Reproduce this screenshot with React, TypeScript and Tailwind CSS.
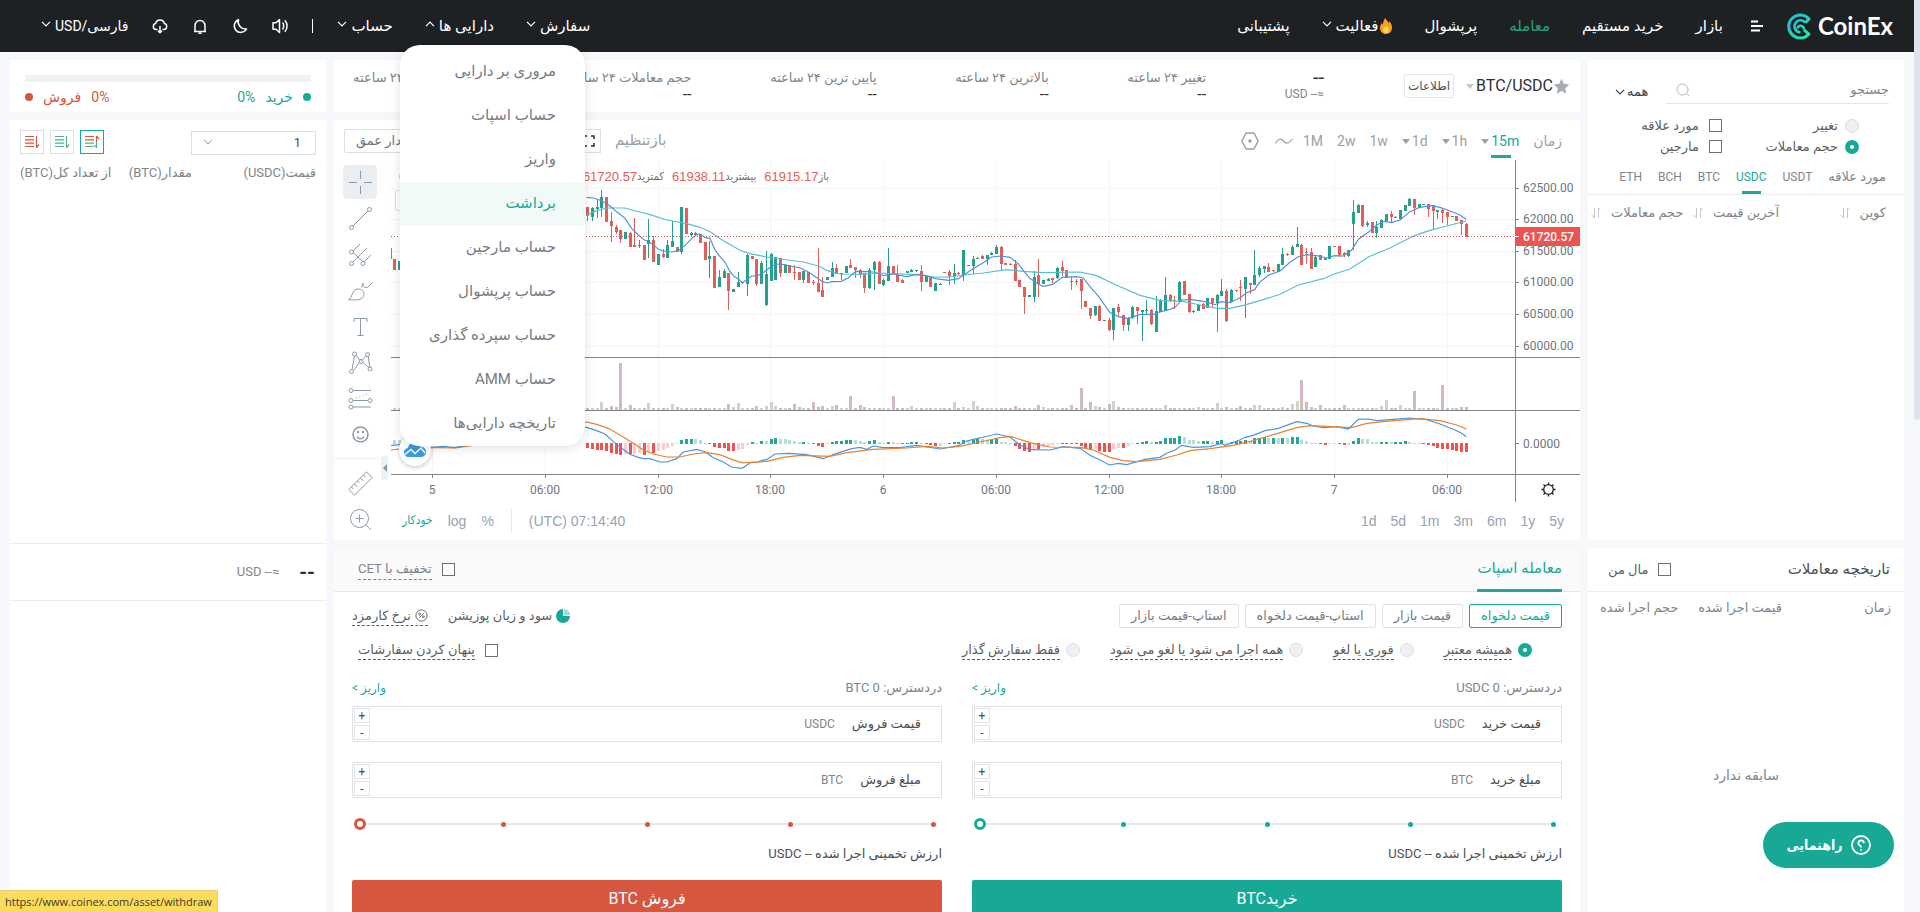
import { ReactNode } from 'react';
import clsx from 'clsx';

type IconProps = { className?: string };
type Candle = [high: number, top: number, bottom: number, low: number, up: 0 | 1];
type Side = 'buy' | 'sell';

/* ---------- chart data ---------- */

// Series values are kept in thirds of a pixel, counted from FIRST (15 minutes per step).
const FIRST = -15;
const STEP = 14.09;
const ORIGIN = 985;

const candles: Candle[] = [
  [262, 262, 288, 302, 0], [260, 265, 290, 302, 1], [237, 262, 268, 295, 1], [210, 231, 264, 292, 1],
  [231, 231, 306, 306, 0], [275, 302, 318, 366, 0], [316, 320, 336, 343, 0], [330, 330, 356, 368, 0],
  [336, 336, 357, 357, 1], [337, 338, 381, 381, 0], [293, 374, 380, 380, 0], [361, 376, 379, 385, 1],
  [375, 375, 419, 419, 0], [297, 361, 372, 413, 1], [348, 361, 425, 425, 0], [403, 403, 434, 434, 1],
  [388, 402, 412, 414, 0], [361, 375, 413, 415, 1], [302, 362, 380, 380, 1], [380, 380, 396, 396, 0],
  [261, 261, 397, 402, 1], [263, 263, 342, 342, 0], [336, 340, 344, 350, 1], [336, 339, 344, 348, 0],
  [342, 342, 369, 369, 0], [366, 366, 419, 419, 0], [362, 409, 418, 475, 1], [408, 408, 503, 505, 0],
  [450, 470, 501, 501, 1], [448, 453, 474, 474, 1], [460, 460, 514, 570, 0], [507, 507, 516, 516, 1],
  [456, 487, 500, 500, 1], [485, 487, 490, 492, 1], [403, 405, 492, 528, 1], [407, 408, 417, 417, 0],
  [417, 417, 492, 497, 0], [422, 429, 491, 491, 1], [393, 462, 555, 558, 1], [400, 402, 482, 482, 1],
  [411, 411, 480, 480, 1], [414, 414, 459, 472, 0], [434, 434, 459, 459, 1], [435, 435, 459, 459, 0],
  [436, 456, 460, 480, 0], [456, 456, 480, 480, 0], [453, 453, 480, 489, 1], [455, 455, 488, 488, 0],
  [479, 486, 490, 494, 0], [383, 488, 516, 516, 0], [472, 510, 531, 531, 0], [471, 471, 479, 479, 1],
  [426, 444, 472, 472, 1], [432, 444, 462, 462, 0], [458, 458, 461, 481, 1], [438, 438, 458, 458, 1],
  [417, 434, 444, 444, 0], [441, 441, 451, 474, 0], [447, 450, 462, 474, 0], [458, 458, 504, 518, 0],
  [445, 450, 504, 508, 1], [423, 426, 450, 510, 1], [424, 426, 492, 492, 0], [478, 480, 494, 497, 1],
  [384, 438, 482, 482, 1], [438, 438, 461, 461, 0], [435, 461, 486, 486, 0], [478, 480, 488, 488, 0],
  [453, 453, 459, 459, 1], [447, 450, 455, 455, 1], [450, 450, 453, 455, 1], [435, 452, 486, 512, 0],
  [466, 468, 486, 486, 1], [468, 468, 501, 501, 0], [489, 489, 513, 513, 1], [490, 491, 494, 494, 1],
  [456, 456, 460, 460, 0], [450, 456, 468, 495, 0], [432, 458, 468, 492, 1], [456, 460, 463, 465, 0],
  [390, 390, 465, 482, 1], [434, 435, 438, 438, 1], [408, 417, 438, 462, 1], [412, 414, 417, 417, 1],
  [406, 408, 417, 418, 0], [405, 405, 417, 434, 1], [397, 398, 404, 406, 1], [375, 380, 402, 402, 1],
  [378, 380, 432, 450, 0], [430, 430, 434, 436, 0], [430, 432, 435, 436, 0], [420, 432, 482, 482, 0],
  [480, 480, 501, 501, 0], [501, 501, 531, 582, 0], [525, 526, 530, 530, 1], [453, 471, 531, 546, 1],
  [417, 465, 492, 531, 0], [480, 480, 492, 492, 1], [474, 476, 482, 482, 1], [474, 475, 480, 488, 0],
  [441, 444, 474, 476, 1], [423, 441, 453, 468, 0], [450, 450, 474, 474, 0], [470, 482, 486, 510, 0],
  [476, 482, 486, 496, 0], [476, 476, 513, 567, 0], [543, 543, 560, 560, 0], [563, 563, 588, 597, 0],
  [558, 558, 585, 588, 1], [556, 558, 602, 602, 0], [600, 600, 603, 603, 1], [594, 600, 630, 632, 0],
  [563, 565, 630, 660, 1], [552, 561, 576, 588, 0], [585, 585, 615, 633, 0], [592, 594, 615, 633, 1],
  [558, 561, 594, 596, 1], [561, 561, 573, 612, 0], [570, 571, 577, 663, 1], [540, 571, 574, 582, 1],
  [568, 570, 612, 616, 0], [528, 573, 635, 636, 1], [538, 540, 576, 576, 1], [471, 525, 572, 572, 1],
  [522, 525, 543, 545, 0], [528, 540, 544, 568, 0], [483, 486, 543, 545, 1], [483, 484, 524, 524, 0],
  [522, 522, 576, 578, 0], [570, 572, 576, 578, 1], [552, 554, 572, 572, 1], [549, 553, 566, 568, 0],
  [534, 534, 563, 563, 1], [534, 535, 549, 560, 0], [522, 524, 549, 636, 1], [477, 512, 528, 528, 1],
  [507, 512, 604, 606, 0], [506, 510, 545, 545, 1], [510, 510, 513, 515, 0], [480, 500, 503, 543, 0],
  [471, 471, 507, 594, 1], [488, 490, 495, 522, 0], [390, 465, 495, 495, 1], [437, 444, 465, 472, 1],
  [438, 438, 447, 460, 1], [429, 440, 456, 456, 0], [450, 450, 453, 455, 0], [432, 432, 456, 456, 1],
  [384, 402, 435, 435, 1], [400, 401, 404, 407, 0], [375, 380, 404, 404, 1], [321, 372, 381, 381, 1],
  [373, 375, 435, 435, 0], [384, 396, 400, 432, 0], [384, 396, 447, 447, 0], [408, 410, 440, 440, 1],
  [406, 406, 419, 419, 0], [413, 415, 419, 419, 1], [378, 378, 416, 416, 1], [378, 378, 381, 381, 0],
  [378, 378, 405, 411, 0], [396, 400, 404, 411, 0], [390, 390, 408, 410, 1], [240, 276, 312, 390, 1],
  [252, 255, 278, 278, 1], [255, 255, 318, 321, 0], [303, 308, 316, 321, 1], [306, 306, 338, 338, 0],
  [303, 320, 338, 354, 1], [298, 300, 324, 324, 1], [282, 282, 303, 303, 1], [273, 282, 291, 306, 0],
  [288, 290, 294, 294, 0], [270, 270, 296, 298, 1], [255, 255, 273, 273, 1], [234, 236, 258, 258, 1],
  [237, 237, 264, 285, 0], [252, 252, 265, 265, 1], [252, 252, 255, 255, 1], [252, 252, 266, 290, 0],
  [255, 255, 273, 326, 0], [270, 270, 276, 297, 1], [265, 270, 280, 310, 0], [276, 276, 291, 316, 0],
  [288, 288, 291, 291, 1], [288, 288, 302, 302, 0], [300, 300, 311, 345, 0], [308, 311, 350, 350, 0],
];

const volumePeaks: Record<number, number> = {
  [-12]: 23, [-10]: 12, [-9]: 10, [-8]: 141, [-6]: 14, [-2]: 20, 3: 17, 4: 9, 15: 17, 16: 8, 17: 20, 21: 11,
  23: 11, 24: 23, 25: 11, 29: 17, 30: 8, 33: 23, 34: 8, 35: 11, 37: 11, 38: 14, 41: 41, 43: 14, 44: 8, 50: 41,
  54: 11, 63: 23, 65: 8, 67: 26, 68: 11, 76: 11, 81: 14, 82: 8, 88: 14, 90: 65, 92: 23, 93: 11, 94: 8, 96: 17,
  97: 26, 98: 8, 108: 14, 115: 8, 119: 20, 121: 8, 124: 11, 127: 14, 128: 14, 133: 8, 135: 17, 136: 26,
  137: 89, 138: 23, 139: 8, 141: 14, 146: 14, 154: 11, 155: 29, 158: 14, 161: 56, 167: 74, 171: 8, 172: 8,
};

const histogram = [
  -14, -19, -21, -21, -25, -30, -34, -35, -33, -34, -32, -30, -36, -28, -30, -25, -20, -15, -8, -4, 10, 14, 14, 13,
  10, 3, -3, -13, -15, -16, -24, -24, -20, -17, -6, 4, 2, 8, 7, 14, 17, 14, 13, 11, 8, 4, 4, 1, -3, -9, -12, -3, 4,
  7, 8, 10, 12, 11, 9, 4, 7, 10, 4, 2, 5, 4, 1, -2, -2, 5, 5, 1, -1, -6, -9, -8, -3, 1, 4, 6, 12, 8, 14, 15, 14,
  12, 12, 14, 6, 4, 1, -9, -17, -24, -26, -18, -18, -13, -9, -6, -3, 1, 1, 1, -1, -8, -15, -22, -18, -25, -26, -26,
  -18, -14, -15, -9, -3, 2, 5, 8, 5, 6, 8, 16, 17, 17, 22, 20, 12, 10, 8, 8, 8, 6, 8, 10, 2, 6, 8, 9, 12, 9, 16,
  18, 20, 18, 18, 17, 18, 17, 20, 20, 12, 8, 3, 1, -4, -7, -4, -1, -3, -7, -6, 8, 17, 14, 13, 6, 4, 5, 5, 4, 4, 5,
  7, 4, 2, 1, 1, -6, -10, -14, -17, -18, -20, -23, -26, -26,
];

const fastAverage =
  '770,232 790,234 815,242 840,258 862,277 885,295 905,325 925,345 945,361 968,372 985,388 1000,393 1025,396 1045,392 1065,376 1085,356 1100,344 1112,342 1125,353 1140,355 1155,390 1170,410 1185,427 1200,455 1212,469 1225,477 1237,488 1252,478 1265,468 1280,468 1295,461 1310,450 1322,441 1337,432 1364,434 1393,441 1406,442 1435,456 1462,474 1477,485 1492,489 1505,485 1534,484 1555,473 1577,454 1605,455 1633,456 1660,467 1690,462 1730,470 1760,463 1787,467 1817,476 1855,481 1885,476 1900,466 1928,447 1957,430 1985,411 2013,408 2040,412 2065,432 2098,474 2126,493 2140,499 2168,493 2197,472 2239,470 2260,474 2280,500 2308,532 2339,577 2365,590 2395,596 2430,583 2470,583 2490,576 2520,568 2535,562 2555,540 2580,538 2625,545 2655,554 2674,545 2700,548 2730,533 2750,518 2774,509 2788,488 2815,466 2850,453 2880,427 2903,411 2930,404 2960,407 2990,414 3013,407 3040,408 3065,390 3086,357 3115,337 3139,316 3162,304 3184,308 3210,300 3240,275 3270,262 3302,257 3330,262 3360,273 3385,283 3409,298';
const slowAverage =
  '770,286 800,272 830,264 885,264 930,276 960,284 1010,300 1070,311 1110,322 1140,335 1180,362 1230,391 1260,401 1310,411 1350,417 1420,426 1465,438 1490,451 1530,462 1600,463 1645,459 1760,464 1810,471 1860,471 1900,465 1960,459 2030,449 2080,454 2140,458 2250,456 2300,467 2350,491 2430,526 2490,541 2560,544 2610,555 2660,565 2700,565 2740,556 2790,542 2850,523 2905,495 2980,476 3013,462 3060,447 3115,411 3180,384 3255,346 3300,331 3350,318 3409,303';
const macdLine =
  '183,976 216,974 300,976 375,983 420,974 500,950 600,925 700,912 770,922 800,932 825,942 850,965 875,985 900,1003 925,1012 940,1016 960,1016 990,1026 1010,1026 1040,1016 1060,996 1100,988 1125,995 1150,1013 1180,1026 1205,1041 1236,1045 1265,1026 1280,1028 1295,1021 1310,1019 1335,1002 1375,1000 1430,1004 1480,1016 1520,1000 1565,986 1590,982 1610,988 1630,978 1660,983 1710,983 1760,976 1830,987 1885,977 1910,963 1930,958 1975,948 2000,942 2040,951 2070,975 2100,989 2160,990 2200,980 2250,985 2280,1006 2310,1020 2338,1035 2365,1030 2390,1034 2445,1018 2490,1012 2510,1000 2535,990 2555,976 2590,982 2640,980 2674,970 2685,976 2725,962 2745,952 2770,946 2805,932 2845,925 2900,905 2930,910 2950,918 2980,923 3020,920 3055,927 3085,898 3115,897 3140,902 3190,898 3240,894 3290,899 3330,912 3370,928 3395,940 3409,950';
const signalLine =
  '183,990 216,986 300,982 375,984 420,978 500,960 600,930 700,908 770,906 800,913 835,925 870,945 910,970 940,990 970,1002 1010,1011 1050,1011 1090,1002 1130,998 1170,1004 1205,1018 1235,1028 1260,1028 1310,1024 1360,1012 1410,1006 1500,1009 1550,998 1630,988 1730,984 1790,979 1840,984 1890,979 1950,966 2010,953 2045,950 2100,968 2160,981 2250,982 2290,990 2340,1012 2380,1022 2420,1025 2490,1018 2540,1005 2580,992 2640,986 2710,976 2770,962 2830,944 2900,923 2940,917 3065,923 3110,910 3190,902 3270,896 3330,902 3380,915 3409,927';

const priceTicks = [
  { y: 28, label: '62500.00' },
  { y: 59, label: '62000.00' },
  { y: 91, label: '61500.00' },
  { y: 122, label: '61000.00' },
  { y: 154, label: '60500.00' },
  { y: 186, label: '60000.00' },
];

const timeTicks = [
  { x: 41, label: '5' },
  { x: 154, label: '06:00' },
  { x: 267, label: '12:00' },
  { x: 379, label: '18:00' },
  { x: 492, label: '6' },
  { x: 605, label: '06:00' },
  { x: 718, label: '12:00' },
  { x: 830, label: '18:00' },
  { x: 943, label: '7' },
  { x: 1056, label: '06:00' },
];

const histogramColor = (value: number, previous: number) => {
  if (value >= 0) return value >= previous ? '#26a69a' : '#b2dfdb';
  return value <= previous ? '#ef5350' : '#fccbcd';
};

/* ---------- icons ---------- */

function Chevron({ className }: IconProps) {
  return (
    <svg viewBox="0 0 10 6" className={clsx('h-1.5 w-2.5', className)} fill="none" stroke="currentColor" strokeWidth="1.2">
      <path d="M1 .8 5 4.8 9 .8" />
    </svg>
  );
}

function Caret({ className }: IconProps) {
  return (
    <svg viewBox="0 0 8 5" className={clsx('h-[5px] w-2', className)} fill="currentColor">
      <path d="M0 0h8L4 5z" />
    </svg>
  );
}

function Logo() {
  return (
    <svg viewBox="0 0 24 27" className="h-[27px] w-6" fill="none" strokeLinejoin="round">
      <defs>
        <linearGradient id="logo" x1="0" y1="0" x2="1" y2="1">
          <stop offset="0" stopColor="#2ab4dc" />
          <stop offset="0.45" stopColor="#20cfc0" />
          <stop offset="1" stopColor="#35dfa8" />
        </linearGradient>
      </defs>
      <path
        d="M18.300 9.700 22 6A11.500 11.500 0 1 0 21.800 21.200L16.800 16.600"
        stroke="url(#logo)"
        strokeWidth="3"
      />
      <path
        d="M18.300 9.700A6 6 0 1 0 13.500 19.300M10.500 15.500A3.200 3.200 0 1 1 16.800 16.600"
        stroke="url(#logo)"
        strokeWidth="2.600"
      />
    </svg>
  );
}

function Flame() {
  return (
    <svg viewBox="0 0 12 16" className="h-4 w-3">
      <path d="M5.500 0c.6 2.300 2.400 3.400 3.200 5 .5-.5.7-1.100.7-1.800C11 5 12 7.300 12 9.800 12 13.300 9.300 16 6 16s-6-2.600-6-6c0-2.400 1.200-4 2-5.300.2 1 .5 1.600 1 2C3 4 4 1.600 5.500 0z" fill="#f9a11b" />
      <path d="M6.200 7c.3 1.500 2.600 2.800 2.600 5A2.900 2.900 0 0 1 6 15a2.900 2.900 0 0 1-3-3c0-1.500 1-2.300 1.400-3.200.5.3.7.7.8 1.100.6-.8 1-1.700 1-2.900z" fill="#ffd54a" />
    </svg>
  );
}

function HeaderIcon({ children, label }: { children: ReactNode; label: string }) {
  return (
    <button type="button" aria-label={label}>
      <svg viewBox="0 0 16 16" className="size-4" fill="none" stroke="currentColor" strokeWidth="1.500" strokeLinejoin="round">
        {children}
      </svg>
    </button>
  );
}

function SortIcon() {
  return (
    <svg viewBox="0 0 10 12" className="h-3 w-2.5 text-[#c3c8ce]" fill="none" stroke="currentColor">
      <path d="M3.500 1v10L.5 8M7.500 11V1L9.500 3" />
    </svg>
  );
}

function DepthIcon({ top, bottom, up }: { top: string; bottom: string; up?: boolean }) {
  return (
    <svg viewBox="0 0 16 16" className="size-4" fill="none" strokeWidth="1.200">
      <path d="M1 2.500h9M1 5.800h9" stroke={top} />
      <path d="M1 9.200h9M1 12.500h9" stroke={bottom} />
      <path d="M12.500 2v6" stroke={top} />
      <path d="M12.500 8v6" stroke={bottom} />
      <path d={up ? 'M12.500 2 15 5' : 'M12.500 13.500 15 10.500'} stroke={up ? top : bottom} />
      {up && <path d="M12.500 13.500 10.500 11" stroke={bottom} />}
    </svg>
  );
}

/* ---------- form controls ---------- */

function Checkbox({ id }: { id: string }) {
  return (
    <input
      id={id}
      type="checkbox"
      className="size-[13px] shrink-0 appearance-none border border-[#6b7076] bg-white checked:bg-[#17a996]"
    />
  );
}

function Radio({ id, name, defaultChecked }: { id: string; name: string; defaultChecked?: boolean }) {
  return (
    <input
      id={id}
      name={name}
      type="radio"
      defaultChecked={defaultChecked}
      className="size-[14px] shrink-0 appearance-none rounded-full border border-[#dcdee2] bg-[#eff0f2] checked:border-5 checked:border-[#17a996] checked:bg-white"
    />
  );
}

/* ---------- header ---------- */

const accountMenu = [
  'مروری بر دارایی',
  'حساب اسپات',
  'واریز',
  'برداشت',
  'حساب مارجین',
  'حساب پرپشوال',
  'حساب سپرده گذاری',
  'حساب AMM',
  'تاریخچه دارایی‌ها',
];

function AccountMenu() {
  return (
    <ul className="absolute top-[45px] -right-[91px] z-20 w-[185px] overflow-hidden rounded-[20px] bg-white pt-[5px] text-[15px] text-[#777b80] shadow-[0_2px_12px_rgba(0,0,0,0.12)]">
      {accountMenu.map((item) => (
        <li key={item}>
          <a
            href="#"
            className={clsx('block h-11 pr-[29px] leading-[42px]', item === 'برداشت' && 'bg-[#f2faf9] text-[#17a996]')}
          >
            {item}
          </a>
        </li>
      ))}
    </ul>
  );
}

function NavItem({ children, open, arrow }: { children: ReactNode; open?: boolean; arrow?: boolean }) {
  return (
    <a href="#" className="flex items-center gap-1 whitespace-nowrap">
      {children}
      {arrow && <Chevron className={clsx('-mt-1', open && 'rotate-180')} />}
    </a>
  );
}

function Header() {
  return (
    <header className="flex h-[52px] shrink-0 items-center justify-between bg-[#1e2124] pr-[21px] pl-[41px] text-[15px] text-white">
      <nav className="flex items-center gap-8">
        <a href="#" className="flex items-center gap-[7px]" dir="ltr">
          <Logo />
          <span className="font-['Lato'] text-2xl leading-none font-bold">CoinEx</span>
        </a>
        <button type="button" aria-label="منو" className="-mr-2 -ml-1">
          <svg viewBox="0 0 12 12" className="size-3" stroke="currentColor" strokeWidth="2">
            <path d="M0 1.500h7M0 6h12M0 10.500h9" />
          </svg>
        </button>
        <NavItem>بازار</NavItem>
        <NavItem>خرید مستقیم</NavItem>
        <a href="#" className="text-[#26a17b]">
          معامله
        </a>
        <NavItem>پرپشوال</NavItem>
        <NavItem arrow>
          <span className="flex items-center gap-0.5">
            <Flame />
            فعالیت
          </span>
        </NavItem>
        <NavItem>پشتیبانی</NavItem>
      </nav>
      <div className="flex items-center gap-6">
        <div className="flex items-center gap-8">
          <NavItem arrow>سفارش</NavItem>
          <div className="relative flex h-[52px] items-center">
            <NavItem arrow open>
              دارایی ها
            </NavItem>
            <AccountMenu />
          </div>
          <NavItem arrow>حساب</NavItem>
        </div>
        <span className="h-3.5 w-px bg-white" />
        <HeaderIcon label="صدا">
          <path d="M7.500 1.500v13L4 11.200H1V4.800h3zM10.500 4.500c1.600 1.800 1.600 5.200 0 7M12.800 2.200c3 3.200 3 8.400 0 11.600" />
        </HeaderIcon>
        <HeaderIcon label="حالت شب">
          <path d="M6.500 1.800a6.500 6.500 0 1 0 8 9.200A7.200 7.200 0 0 1 6.500 1.800z" />
        </HeaderIcon>
        <HeaderIcon label="اعلان‌ها">
          <path d="M3 13.500V7.500a5 5 0 0 1 10 0v6M2 13.500h12M6.500 15.200h3" />
        </HeaderIcon>
        <HeaderIcon label="دانلود">
          <path d="M5.500 11.500H4A3 3 0 0 1 3.600 5.600a4.500 4.500 0 0 1 8.800 0A3 3 0 0 1 12 11.500h-1.500M8 8v6.500M6 12.700l2 2 2-2" />
        </HeaderIcon>
        <NavItem arrow>
          <span className="text-sm">فارسی/USD</span>
        </NavItem>
      </div>
    </header>
  );
}

/* ---------- right column ---------- */

function MarketList() {
  return (
    <section className="flex h-[480px] flex-col bg-white pt-5 text-[13px] text-[#80858b]">
      <div className="flex items-center pr-[15px] pl-[27px]">
        <div className="flex h-6 w-[223px] items-center justify-between border-b border-[#e3e5e8] pb-1">
          <input
            type="search"
            aria-label="جستجو"
            placeholder="جستجو"
            className="w-40 bg-transparent text-[13px] outline-none placeholder:text-[#80858b]"
          />
          <svg viewBox="0 0 14 14" className="ml-2.5 size-3.5 text-[#b0b4b9]" fill="none" stroke="currentColor">
            <circle cx="6.500" cy="6.500" r="5.500" />
            <path d="m10.500 10.500 2.500 2.500" />
          </svg>
        </div>
        <button type="button" className="mr-auto flex items-center gap-0.5 text-[#3c4045]">
          همه
          <Chevron />
        </button>
      </div>
      <div className="mt-3 grid grid-cols-[137px_1fr] gap-y-0.5 pr-[45px] leading-[19px] text-[#5b5f64]">
        <label htmlFor="sort-change" className="flex items-center gap-[7px]">
          <Radio id="sort-change" name="sort" />
          تغییر
        </label>
        <label htmlFor="only-favorite" className="flex items-center gap-[10px]">
          <Checkbox id="only-favorite" />
          مورد علاقه
        </label>
        <label htmlFor="sort-volume" className="flex items-center gap-[7px]">
          <Radio id="sort-volume" name="sort" defaultChecked />
          حجم معاملات
        </label>
        <label htmlFor="only-margin" className="flex items-center gap-[10px]">
          <Checkbox id="only-margin" />
          مارجین
        </label>
      </div>
      <div role="tablist" className="mt-[3px] flex h-9 items-center gap-4 border-b border-[#eceef0] pr-[18px] text-[12px]">
        <button type="button" role="tab" className="text-[13px]">
          مورد علاقه
        </button>
        {['USDT', 'USDC', 'BTC', 'BCH', 'ETH'].map((coin) => (
          <button
            key={coin}
            type="button"
            role="tab"
            className={clsx('relative flex h-full items-center', coin === 'USDC' && 'text-[#17a996]')}
          >
            {coin}
            {coin === 'USDC' && <span className="absolute inset-x-1.5 bottom-0 h-[3px] bg-[#26a69a]" />}
          </button>
        ))}
      </div>
      <div className="flex items-center gap-2 pt-2 pr-[18px] pl-[3px] leading-5">
        <span className="flex w-[99px] items-center gap-2.5">
          کوین
          <SortIcon />
        </span>
        <span className="flex items-center gap-2.5">
          آخرین قیمت
          <SortIcon />
        </span>
        <span className="mr-auto flex items-center gap-2.5">
          حجم معاملات
          <SortIcon />
        </span>
      </div>
    </section>
  );
}

function TradeHistory() {
  return (
    <section className="flex flex-1 flex-col bg-white text-[13px] text-[#80858b]">
      <div className="flex h-11 items-center justify-between border-b border-[#eceef0] pr-3.5 pl-5">
        <h2 className="text-[15px] text-[#4b4f54]">تاریخچه معاملات</h2>
        <label htmlFor="mine" className="flex items-center gap-2.5 text-[#5b5f64]">
          <Checkbox id="mine" />
          مال من
        </label>
      </div>
      <div className="grid grid-cols-[109px_1fr_auto] pt-1.5 pr-[13px] pl-3">
        <span>زمان</span>
        <span>قیمت اجرا شده</span>
        <span>حجم اجرا شده</span>
      </div>
      <p className="pt-[147px] text-center text-sm">سابقه ندارد</p>
    </section>
  );
}

/* ---------- center column ---------- */

const stats = ['تغییر ۲۴ ساعته', 'بالاترین ۲۴ ساعته', 'پایین ترین ۲۴ ساعته', 'حجم معاملات ۲۴ ساعته', 'ارزش معاملات ۲۴ ساعته'];

function MarketInfo() {
  return (
    <section className="flex h-[52px] items-center bg-white pr-2.5 pl-[19px]">
      <svg viewBox="0 0 24 24" className="size-[17px]" fill="#a8adb3">
        <path d="m12 1 3.300 7.200 7.700.9-5.700 5.300 1.500 7.800L12 18.400l-6.800 3.800 1.500-7.800L1 9.100l7.700-.9z" />
      </svg>
      <h1 className="text-base text-[#2b2f33]">BTC/USDC</h1>
      <Caret className="mr-0.5 text-[#c3c8ce]" />
      <button type="button" className="mr-3 h-6 rounded-xs border border-[#e3e5e8] px-[3px] text-[12px] text-[#4b4f54]">
        اطلاعات
      </button>
      <div className="mr-20 flex flex-1 justify-between text-[13px] leading-[17px] text-[#80858b]">
        <div>
          <p className="text-xl leading-[17px] text-[#2b2f33]">--</p>
          <p className="text-[12px] leading-[17px]">≈-- USD</p>
        </div>
        {stats.map((label) => (
          <div key={label}>
            <p>{label}</p>
            <p className="text-base leading-[17px] text-[#2b2f33]">--</p>
          </div>
        ))}
      </div>
    </section>
  );
}

function ChartToolbar() {
  return (
    <div className="flex h-10 items-center justify-between pt-0.5 pr-[18px] pl-2.5 text-sm text-[#9aa0a8]">
      <div className="flex items-center gap-3.5">
        <button type="button">زمان</button>
        <button type="button" className="relative flex h-[34px] items-center gap-0.5 text-[#17a996]">
          15m
          <Caret className="text-[#9aa0a8]" />
          <span className="absolute right-2 bottom-0 h-[3px] w-5 bg-[#26a69a]" />
        </button>
        {['1h', '1d'].map((period) => (
          <button key={period} type="button" className="flex items-center gap-0.5">
            {period}
            <Caret />
          </button>
        ))}
        {['1w', '2w', '1M'].map((period) => (
          <button key={period} type="button">
            {period}
          </button>
        ))}
        <button type="button" aria-label="خط" className="-mr-1">
          <svg viewBox="0 0 18 10" className="h-2.5 w-[18px]" fill="none" stroke="currentColor" strokeWidth="1.200">
            <path d="M.5 7.500C3 3 5.500 1.500 8.500 5s5.500 2.500 9-2" />
          </svg>
        </button>
        <button type="button" aria-label="شاخص" className="mr-0.5">
          <svg viewBox="0 0 18 18" className="size-[18px]" fill="none" stroke="currentColor" strokeWidth="1.500">
            <path d="M5 1h8l4.200 8-4.200 8H5L.8 9z" strokeLinejoin="round" />
            <circle cx="9" cy="9" r="1" fill="currentColor" />
          </svg>
        </button>
      </div>
      <div className="flex items-center gap-3.5">
        <button type="button" className="text-[15px]">
          بازتنظیم
        </button>
        <button type="button" aria-label="تمام صفحه" className="grid size-6 place-items-center border border-[#dcdfe6] text-[#2b2f33]">
          <svg viewBox="0 0 12 12" className="size-3" fill="none" stroke="currentColor" strokeWidth="1.500">
            <path d="M1 4V1h3M8 1h3v3M11 8v3H8M4 11H1V8" />
          </svg>
        </button>
        <button type="button" className="mr-[132px] h-6 rounded-xs border border-[#dcdfe6] px-[11px] text-[13px] text-[#6f7378]">
          نمودار عمق
        </button>
      </div>
    </div>
  );
}

const drawingTools: { label: string; icon: ReactNode }[] = [
  { label: 'Cross', icon: <path d="M12.500 1v8M12.500 16v8M1 12.500h8M16 12.500h8" /> },
  {
    label: 'Trend line',
    icon: (
      <>
        <path d="M5 20 20 5" />
        <circle cx="3.500" cy="21.500" r="2" />
        <circle cx="21.500" cy="3.500" r="2" />
      </>
    ),
  },
  {
    label: 'Pitchfork',
    icon: (
      <>
        <path d="M5 9 12 2M5 20 19 6M16 20l7-7M5 10.500l10 9" />
        <circle cx="3.500" cy="10" r="2" />
        <circle cx="3.500" cy="21.500" r="2" />
        <circle cx="15" cy="21.500" r="2" />
      </>
    ),
  },
  {
    label: 'Brush',
    icon: <path d="M.5 21.500c4-1 3-10.500 9.500-10.500 4 0 6 2.500 6 5.500 0 6-9 6-15.500 5zM14.500 5.500c0 3 2.500 5 5.500 3.500L24.500 4.500M14 9.500c0-2 .5-3 2-4.500" />,
  },
  { label: 'Text', icon: <path d="M6 8V4.500h13V8M12.500 4.500v17M9.500 21.500h6" /> },
  {
    label: 'Pattern',
    icon: (
      <>
        <path d="M4 19.500 6.500 6M8 5l4 5.500M14 10.500 18 6M20 6l2 12M6 20l5-7M15 12.500l6 5" />
        <circle cx="3.500" cy="21.500" r="2" />
        <circle cx="6.500" cy="4" r="2" />
        <circle cx="13" cy="11.500" r="2" />
        <circle cx="19.500" cy="4.500" r="2" />
        <circle cx="22" cy="19" r="2" />
      </>
    ),
  },
  {
    label: 'Forecast',
    icon: (
      <>
        <path d="M5 4.500h18M5 14.500h15M5 21h18" />
        <path d="M8 12l13-5" strokeDasharray="1 2.500" />
        <circle cx="3" cy="4.500" r="2" />
        <circle cx="3" cy="14.500" r="2" />
        <circle cx="22" cy="14.500" r="2" />
        <circle cx="3" cy="21" r="2" />
      </>
    ),
  },
  {
    label: 'Emoji',
    icon: (
      <>
        <circle cx="12.500" cy="12.500" r="7.500" strokeWidth="1.500" />
        <path d="M9 14.500c1.500 3 5.500 3 7 0" strokeWidth="1.500" />
        <path d="M10 9v2M15 9v2" strokeWidth="2" />
      </>
    ),
  },
];

const measureTools: { label: string; icon: ReactNode }[] = [
  {
    label: 'Measure',
    icon: <path d="M18.500.8 24.200 6.500 6.500 24.200.8 18.500zM15.500 4l2 2M12.500 7l3 3M9.500 10l2 2M6.500 13l3 3M3.500 16l2 2" />,
  },
  {
    label: 'Zoom in',
    icon: (
      <>
        <circle cx="11.500" cy="11.500" r="9" />
        <path d="M7.500 11.500h8M11.500 7.500v8M18 18l5 5" />
      </>
    ),
  },
];

function ToolButton({ label, icon, active }: { label: string; icon: ReactNode; active?: boolean }) {
  return (
    <button
      type="button"
      aria-label={label}
      className={clsx('my-px grid size-[34px] place-items-center rounded-sm', active && 'bg-[#ebeef0]')}
    >
      <svg viewBox="0 0 25 25" className="size-[25px] text-[#8a9aa8]" fill="none" stroke="currentColor">
        {icon}
      </svg>
    </button>
  );
}

function Chart() {
  const x = (index: number) => ORIGIN + index * STEP;

  return (
    <svg viewBox="0 0 1189 342" className="h-auto w-full" fontFamily="Roboto" fontSize="12" fill="#70757d">
      <g stroke="#f3f5f7">
        {priceTicks.map(({ y }) => (
          <path key={y} d={`M0 ${y}.500H1124`} />
        ))}
        {timeTicks.map((tick) => (
          <path key={tick.x} d={`M${tick.x}.500 0V314`} />
        ))}
      </g>

      <g transform={`translate(-61 -40) scale(${1 / 3})`}>
        <g shapeRendering="crispEdges">
          {candles.map(([high, top, bottom, low, up], i) => (
            <g key={i} fill={up ? '#26a08a' : '#e25e59'}>
              <rect x={x(i + FIRST) - 1.5} y={high} width="3" height={low - high} />
              <rect x={x(i + FIRST) - 4.5} y={top} width="9" height={bottom - top} />
            </g>
          ))}
          <path d="M184 384v34" stroke="#e25e59" strokeWidth="3" />
          <path d="M189 418h9v32h-9z" fill="#e25e59" />
          <path d="M204 422h9v28h-9z" fill="#26a08a" />
          {candles.map(([, , , , up], i) => {
            const height = volumePeaks[i + FIRST] ?? 6;
            return (
              <rect
                key={i}
                x={x(i + FIRST) - 4.5}
                y={870 - height}
                width="9"
                height={height}
                fill={up ? '#cdd6c2' : '#d5babd'}
              />
            );
          })}
          <path d="M190 864h9v6h-9zM204 864h9v6h-9z" fill="#cdd6c2" />
          {histogram.map((value, i) => (
            <rect
              key={i}
              x={x(i + FIRST) - 4.5}
              y={value < 0 ? 969 : 971 - value}
              width="9"
              height={Math.max(Math.abs(value), 2)}
              fill={histogramColor(value, histogram[i - 1] ?? 0)}
            />
          ))}
          <path d="M190 961h9v10h-9zM204 960h9v11h-9z" fill="#b2dfdb" />
        </g>
        <g fill="none" strokeWidth="3.500">
          <polyline points={slowAverage} stroke="#55c0cf" />
          <polyline points={fastAverage} stroke="#4f90da" />
          <polyline points={macdLine} stroke="#4a94de" />
          <polyline points={signalLine} stroke="#e8822e" />
        </g>
      </g>

      <path d="M0 76.500H1124" stroke="#c9504c" strokeDasharray="1 2" />
      <g stroke="#80848b" shapeRendering="crispEdges">
        <path d="M0 197.500H1189M0 250.500H1189M0 314.500H1189M1124.500 0V342" />
        {priceTicks.map(({ y }) => (
          <path key={y} d={`M1124 ${y}.500h4`} />
        ))}
        <path d="M1124 283.500h4" />
        {timeTicks.map((tick) => (
          <path key={tick.x} d={`M${tick.x}.500 314v4`} />
        ))}
      </g>

      {priceTicks.map(({ y, label }) => (
        <text key={label} x="1132" y={y + 4}>
          {label}
        </text>
      ))}
      <text x="1132" y="288">
        0.0000
      </text>
      <path d="M1124 67h65v19h-65z" fill="#ef5350" />
      <path d="M1124 76.500h4" stroke="#fff" />
      <text x="1132" y="81" fill="#fff" fontWeight="500">
        61720.57
      </text>
      <g textAnchor="middle">
        {timeTicks.map((tick) => (
          <text key={tick.x} x={tick.x} y="334">
            {tick.label}
          </text>
        ))}
      </g>
      <g stroke="#1e2124" strokeWidth="1.300" fill="none">
        <circle cx="1157.500" cy="329.500" r="4.800" />
        <path d="M1157.500 322.500v2M1157.500 334.500v2M1150.500 329.500h2M1162.500 329.500h2M1152.500 324.500l1.500 1.500M1161 333l1.500 1.500M1162.500 324.500 1161 326M1154 333l-1.500 1.500" />
      </g>
    </svg>
  );
}

const legend = [
  { label: 'باز', value: '61915.17' },
  { label: 'بیشترید', value: '61938.11' },
  { label: 'کمترید', value: '61720.57' },
  { label: 'بسته', value: '61720.57' },
];

function ChartPanel() {
  return (
    <section className="flex h-[420px] flex-col bg-white">
      <ChartToolbar />
      <div className="flex flex-1" dir="ltr">
        <div className="flex w-[57px] shrink-0 flex-col">
          <div className="flex flex-col pt-1 pl-[9px]">
            {drawingTools.map((tool, i) => (
              <ToolButton key={tool.label} {...tool} active={i === 0} />
            ))}
          </div>
          <div className="mt-1.5 mr-3 flex flex-col border-t border-[#eceef0] pt-1.5 pl-[9px]">
            {measureTools.map((tool) => (
              <ToolButton key={tool.label} {...tool} />
            ))}
          </div>
        </div>
        <div className="relative flex min-w-0 flex-1 flex-col">
          <Chart />
          <div className="absolute top-2 left-2 flex flex-col gap-1">
            <p dir="rtl" className="flex h-[18px] w-[430px] items-center gap-2 bg-white text-[#6b7079]">
              {legend.map(({ label, value }) => (
                <span
                  key={label}
                  className="flex items-center font-['DejaVu_Sans_Condensed'] text-[11px] last:mr-auto"
                >
                  {label}
                  <span className="font-['Liberation_Sans'] text-[13px] text-[#e25e59]">{value}</span>
                </span>
              ))}
            </p>
            <button type="button" aria-label="Collapse legend" className="-ml-1 h-[21px] w-6 rounded-xs border border-[#dcdfe6] bg-white" />
          </div>
          <button
            type="button"
            aria-label="Collapse toolbar"
            className="absolute bottom-[60px] -left-2.5 grid h-6 w-[7px] place-items-center rounded-xs bg-[#eef1f3] text-[#8a9aa8]"
          >
            <svg viewBox="0 0 4 8" className="h-2 w-1" fill="currentColor">
              <path d="M4 0v8L0 4z" />
            </svg>
          </button>
          <a
            href="#"
            aria-label="TradingView"
            className="absolute bottom-[74px] left-2 grid size-8 place-items-center rounded-full bg-white shadow-[0_1px_4px_rgba(0,0,0,0.25)]"
          >
            <svg viewBox="0 0 22 14" className="h-3.5 w-[22px]">
              <path d="M5 14a4.500 4.500 0 0 1-1-9 6.500 6.500 0 0 1 12.500-1.200A5 5 0 0 1 17.500 14z" fill="#3a9be5" />
              <path d="m1 11.500 6-5 4 4L17 5l4 5" stroke="#fff" strokeWidth="1.500" fill="none" />
            </svg>
          </a>
          <div className="flex flex-1 items-center justify-between pr-4 pl-[11px] font-['Liberation_Sans'] text-sm text-[#95a3b1]">
            <div className="flex items-center gap-[15px]">
              <button type="button" className="font-['DejaVu_Sans_Condensed'] text-[12px] text-[#17a996]">
                خودکار
              </button>
              <button type="button">log</button>
              <button type="button">%</button>
              <span className="ml-0.5 h-6 w-px bg-[#e6e9ec]" />
              <span className="ml-0.5">(UTC) 07:14:40</span>
            </div>
            <div className="flex gap-3.5">
              {['1d', '5d', '1m', '3m', '6m', '1y', '5y'].map((range) => (
                <button key={range} type="button">
                  {range}
                </button>
              ))}
            </div>
          </div>
        </div>
      </div>
    </section>
  );
}

const orderTypes = ['قیمت دلخواه', 'قیمت بازار', 'استاپ-قیمت دلخواه', 'استاپ-قیمت بازار'];
const validity = ['همیشه معتبر', 'فوری یا لغو', 'همه اجرا می شود یا لغو می شود', 'فقط سفارش گذار'];

function AmountField({ id, label, unit }: { id: string; label: string; unit: string }) {
  return (
    <div className="flex h-9 items-center border border-[#dfe2e6] pr-5 pl-px">
      <label htmlFor={id} className="text-[#4b4f54]">
        {label}
      </label>
      <span className="mr-[17px] text-[12px] text-[#80858b]">{unit}</span>
      <input id={id} type="text" className="mx-3 min-w-0 flex-1 bg-transparent outline-none" />
      <div className="flex flex-col gap-0.5 text-[12px] leading-3 text-[#4b4f54]">
        <button type="button" className="h-[15px] w-4 border border-[#dfe2e6]">
          +
        </button>
        <button type="button" className="h-[15px] w-4 border border-[#dfe2e6]">
          -
        </button>
      </div>
    </div>
  );
}

function OrderForm({ side }: { side: Side }) {
  const buy = side === 'buy';

  return (
    <form className="flex flex-1 flex-col">
      <div className="flex items-center justify-between leading-5 text-[#80858b]">
        <span>دردسترس: 0 {buy ? 'USDC' : 'BTC'}</span>
        <a href="#" className="text-[12px] text-[#17a996]">
          واریز &gt;
        </a>
      </div>
      <div className="flex flex-col gap-5 pt-2">
        <AmountField id={`${side}-price`} label={buy ? 'قیمت خرید' : 'قیمت فروش'} unit="USDC" />
        <AmountField id={`${side}-amount`} label={buy ? 'مبلغ خرید' : 'مبلغ فروش'} unit="BTC" />
      </div>
      <div className="relative mx-0.5 mt-5 flex h-3 items-center" dir="ltr">
        <div
          className={clsx(
            'pointer-events-none absolute inset-x-1 flex items-center justify-between',
            buy ? 'text-[#17a996]' : 'text-[#d6563f]',
          )}
        >
          <span className="absolute inset-x-0 h-0.5 bg-[#e6e8ec]" />
          {[0, 25, 50, 75, 100].map((stop) => (
            <span key={stop} className="relative size-[5px] rounded-full bg-current" />
          ))}
        </div>
        <input
          type="range"
          min="0"
          max="100"
          defaultValue="0"
          aria-label={buy ? 'درصد خرید' : 'درصد فروش'}
          className={clsx(
            'relative h-3 w-full appearance-none bg-transparent [&::-webkit-slider-thumb]:size-3 [&::-webkit-slider-thumb]:appearance-none [&::-webkit-slider-thumb]:rounded-full [&::-webkit-slider-thumb]:border-3 [&::-webkit-slider-thumb]:bg-white',
            buy
              ? '[&::-webkit-slider-thumb]:border-[#17a996]'
              : '[&::-webkit-slider-thumb]:border-[#d6563f]',
          )}
        />
      </div>
      <p className="pt-3.5 leading-5 text-[#4b4f54]">ارزش تخمینی اجرا شده -- USDC</p>
      <button
        type="button"
        className={clsx('mt-4 h-[38px] rounded-xs text-base text-white', buy ? 'bg-[#17a996]' : 'bg-[#d6563f]')}
      >
        {buy ? 'خریدBTC' : 'فروش BTC'}
      </button>
    </form>
  );
}

function TradePanel() {
  return (
    <section className="flex flex-1 flex-col bg-white text-[13px]">
      <div className="flex h-11 items-center justify-between border-b border-[#e6e8ea] bg-[#fafafa] pr-[18px] pl-6">
        <h2 className="-mb-px flex h-11 items-center border-b-3 border-[#26a69a] text-[15px] text-[#17a996]">معامله اسپات</h2>
        <div className="flex items-center gap-2.5 text-[#80858b]">
          <Checkbox id="cet" />
          <label htmlFor="cet" className="border-b border-dashed border-[#80858b]">
            تخفیف با CET
          </label>
        </div>
      </div>
      <div className="flex items-center justify-between px-[18px] pt-3">
        <div className="flex gap-1.5">
          {orderTypes.map((type, i) => (
            <button
              key={type}
              type="button"
              className={clsx(
                'h-6 rounded-xs border px-[11px]',
                i === 0 ? 'border-[#17a996] text-[#17a996]' : 'border-[#dfe2e6] text-[#777b80]',
              )}
            >
              {type}
            </button>
          ))}
        </div>
        <div className="flex items-center gap-5 text-[#5b5f64]">
          <a href="#" className="flex items-center gap-1">
            <svg viewBox="0 0 14 14" className="size-3.5">
              <path d="M7 0a7 7 0 1 0 7 7H7z" fill="#17a996" />
              <path d="M8 0a6 6 0 0 1 6 6H8z" fill="#a5dcd6" />
            </svg>
            سود و زیان پوزیشن
          </a>
          <a href="#" className="flex items-center gap-1 border-b border-dashed border-[#5b5f64]">
            <svg viewBox="0 0 14 14" className="size-[13px]" fill="none" stroke="currentColor">
              <circle cx="7" cy="7" r="6" />
              <circle cx="5" cy="5.500" r="1" />
              <circle cx="9" cy="8.500" r="1" />
              <path d="m4.500 9.500 5-5" />
            </svg>
            نرخ کارمزد
          </a>
        </div>
      </div>
      <div className="flex h-8 items-center justify-between pt-3 pr-12 pl-6 text-[#5b5f64]">
        <div className="flex gap-[30px]">
          {validity.map((option, i) => (
            <div key={option} className="flex items-center gap-1.5">
              <Radio id={`validity-${i}`} name="validity" defaultChecked={i === 0} />
              <label htmlFor={`validity-${i}`} className="border-b border-dashed border-[#5b5f64]">
                {option}
              </label>
            </div>
          ))}
        </div>
        <div className="flex items-center gap-2.5">
          <Checkbox id="hide-orders" />
          <label htmlFor="hide-orders" className="border-b border-dashed border-[#5b5f64]">
            پنهان کردن سفارشات
          </label>
        </div>
      </div>
      <div className="flex gap-[30px] px-[18px] pt-[18px]">
        <OrderForm side="buy" />
        <OrderForm side="sell" />
      </div>
    </section>
  );
}

/* ---------- left column ---------- */

function BuySellRatio() {
  return (
    <section className="flex h-[52px] flex-col gap-[7px] bg-white px-[15px] pt-[15px]">
      <div className="h-[7px] bg-[#f0f1f2]" />
      <div className="flex justify-between text-sm leading-4">
        <span className="flex items-center gap-2.5 text-[#17a996]">
          <span className="size-2 rounded-full bg-current" />
          خرید
          <span>0%</span>
        </span>
        <span className="flex items-center gap-2.5 text-[#d6563f]">
          <span>0%</span>
          فروش
          <span className="size-2 rounded-full bg-current" />
        </span>
      </div>
    </section>
  );
}

function OrderBook() {
  const red = '#d6563f';
  const green = '#4bb58a';

  return (
    <section className="flex flex-1 flex-col bg-white">
      <div className="flex h-[423px] flex-col px-2.5 pt-2.5">
        <div className="flex items-center justify-between">
          <div className="relative">
            <select aria-label="عمق" className="h-6 w-[125px] appearance-none border border-[#dcdfe6] bg-white pr-3.5 text-[13px] text-[#4b4f54]">
              <option>1</option>
            </select>
            <Chevron className="pointer-events-none absolute top-[9px] left-3 text-[#b0b4b9]" />
          </div>
          <div className="flex gap-1.5">
            <button type="button" aria-label="همه" className="grid size-6 place-items-center border border-[#17a996]">
              <DepthIcon top={red} bottom={green} up />
            </button>
            <button type="button" aria-label="خرید" className="grid size-6 place-items-center border border-[#dcdfe6]">
              <DepthIcon top={green} bottom={green} />
            </button>
            <button type="button" aria-label="فروش" className="grid size-6 place-items-center border border-[#dcdfe6]">
              <DepthIcon top={red} bottom={red} />
            </button>
          </div>
        </div>
        <div className="grid grid-cols-[124px_1fr_auto] pt-2 text-[13px] leading-5 text-[#80858b]">
          <span>قیمت(USDC)</span>
          <span>مقدار(BTC)</span>
          <span>از تعداد کل(BTC)</span>
        </div>
      </div>
      <div className="flex h-[58px] items-center gap-5 border-y border-[#e9edef] pr-[11px]">
        <strong className="text-xl leading-none text-[#2b2f33]">--</strong>
        <span className="text-[13px] text-[#80858b]">≈-- USD</span>
      </div>
    </section>
  );
}

/* ---------- page ---------- */

export default function App() {
  return (
    <div className="flex h-screen overflow-hidden bg-[#f5f7fa] font-['Roboto','DejaVu_Sans',sans-serif]">
      <div dir="rtl" className="flex min-w-0 flex-1 flex-col">
        <Header />
        <main className="flex flex-1 gap-2 p-2 px-2.5 pb-0">
          <div className="flex w-[316px] shrink-0 flex-col gap-2">
            <MarketList />
            <TradeHistory />
          </div>
          <div className="flex min-w-0 flex-1 flex-col gap-2">
            <MarketInfo />
            <ChartPanel />
            <TradePanel />
          </div>
          <div className="flex w-[316px] shrink-0 flex-col gap-2">
            <BuySellRatio />
            <OrderBook />
          </div>
        </main>
      </div>
      <div className="w-1.5 bg-[#f5f7fa]">
        <div className="h-[420px] rounded-b-sm bg-[#dfe4ec]" />
      </div>
      <button
        type="button"
        dir="rtl"
        className="fixed right-[26px] bottom-11 flex h-[46px] w-[131px] items-center justify-center gap-2 rounded-full bg-[#17a996] font-['Roboto','DejaVu_Sans_Condensed',sans-serif] text-sm font-bold text-white"
      >
        <svg viewBox="0 0 20 20" className="size-5" fill="none" stroke="currentColor" strokeWidth="1.800">
          <circle cx="10" cy="10" r="9" />
          <path d="M12.800 8.200a2.700 2.700 0 1 0-4 2.200c.9.500 1.200 1 1.200 2M10 14v1.600" />
        </svg>
        راهنمایی
      </button>
      <p className="fixed bottom-0 left-0 rounded-tr-xs border-t border-r border-[#e5cf7c] bg-[#fddb5c] px-[5px] font-['Open_Sans'] text-[11px] leading-[21px] text-[#3d3a2a]">
        https://www.coinex.com/asset/withdraw
      </p>
    </div>
  );
}
